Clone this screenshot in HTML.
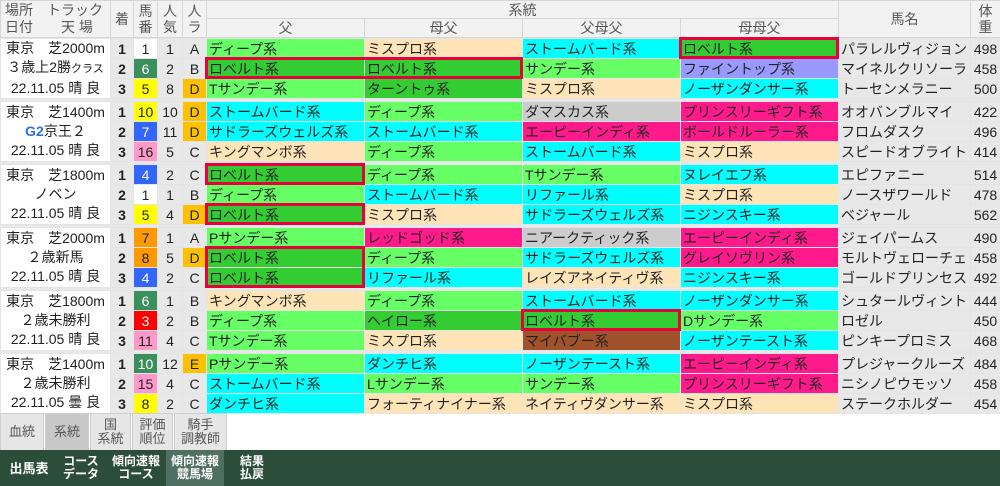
<!DOCTYPE html>
<html><head><meta charset="utf-8">
<style>
*{box-sizing:border-box;margin:0;padding:0}
body{width:1000px;height:486px;overflow:hidden;background:#fff;font-family:"Liberation Sans","Noto Sans CJK JP",sans-serif;color:#222;position:relative}
table{border-collapse:collapse;table-layout:fixed;width:1000px;position:absolute;left:0}
td{padding:0;font-size:14px;line-height:18px;height:20px;max-height:20px;border:1px solid #e4e4e4;white-space:nowrap;overflow:hidden}
th{font-weight:normal;color:#555;font-size:14px;background:#f2f2f2;border:1px solid #d6d6d6;line-height:16px;padding:0}
.hd1 th{height:18px}.hd2 th{height:19px}
.c{text-align:center}.b{font-weight:bold}
.s{padding-left:2px}
.G{background:#66ff66}.D{background:#33cc33}.C{background:#00ffff}.P{background:#ffe4b8}.M{background:#ff1a8c}.Y{background:#cccccc}.L{background:#9999ff}.B{background:#a0522d}
.race{text-align:center;line-height:19px;font-size:14px;background:#fff}
.w1{background:#fff}.g6{background:#3a8f5c;color:#fff}.y5{background:#ffff00}.bl{background:#3366ff;color:#fff}.pk{background:#ff99cc}.or{background:#ff9900}.rd{background:#ff0000;color:#fff}
.rD{background:#ffc000}
.box{position:absolute;border:3px solid #e8003c}
.tabs{position:absolute;left:0;top:413px;height:37px;display:flex}
.tab{background:#e6e6e6;border:1px solid #cfcfcf;border-bottom:none;color:#555;font-size:13px;line-height:14px;display:flex;align-items:center;justify-content:center;text-align:center;margin-right:1px}
.bar{position:absolute;left:0;top:450px;width:1000px;height:36px;background:#2d4d3b}
.bi{position:absolute;top:0;height:36px;color:#fff;font-size:12px;font-weight:bold;line-height:13px;display:flex;align-items:center;justify-content:center;text-align:center}
.bg{position:absolute;left:0;top:37px;width:1000px;height:376px;background:#e8e8e8}
</style></head><body>
<div class="bg"></div>
<table style="top:0">
<colgroup><col style="width:110px"><col style="width:23px"><col style="width:24px"><col style="width:25px"><col style="width:24px"><col style="width:158px"><col style="width:158px"><col style="width:158px"><col style="width:158px"><col style="width:132px"><col style="width:30px"></colgroup>
<tr class="hd1"><th rowspan="2" style="text-align:left;padding:0 4px;line-height:17px">場所　トラック<br>日付　　天 場</th><th rowspan="2">着</th><th rowspan="2">馬<br>番</th><th rowspan="2">人<br>気</th><th rowspan="2">人<br>ラ</th><th colspan="4">系統</th><th rowspan="2">馬名</th><th rowspan="2">体<br>重</th></tr>
<tr class="hd2"><th>父</th><th>母父</th><th>父母父</th><th>母母父</th></tr>
</table>

<table style="top:38px">
<colgroup><col style="width:110px"><col style="width:23px"><col style="width:24px"><col style="width:25px"><col style="width:24px"><col style="width:158px"><col style="width:158px"><col style="width:158px"><col style="width:158px"><col style="width:132px"><col style="width:30px"></colgroup>
<tr><td rowspan="3" class="race">東京　芝2000m<br>３歳上2勝<span style="font-size:11px">クラス</span><br>22.11.05 晴 良</td><td class="c b">1</td><td class="c w1">1</td><td class="c">1</td><td class="c">A</td><td class="s G">ディープ系</td><td class="s P">ミスプロ系</td><td class="s C">ストームバード系</td><td class="s D">ロベルト系</td><td class="s">パラレルヴィジョン</td><td class="c">498</td></tr>
<tr><td class="c b">2</td><td class="c g6">6</td><td class="c">2</td><td class="c">B</td><td class="s D">ロベルト系</td><td class="s D">ロベルト系</td><td class="s G">サンデー系</td><td class="s L">ファイントップ系</td><td class="s">マイネルクリソーラ</td><td class="c">458</td></tr>
<tr><td class="c b">3</td><td class="c y5">5</td><td class="c">8</td><td class="c rD">D</td><td class="s G">Tサンデー系</td><td class="s D">ターントゥ系</td><td class="s P">ミスプロ系</td><td class="s C">ノーザンダンサー系</td><td class="s">トーセンメラニー</td><td class="c">500</td></tr>
</table>

<table style="top:101px">
<colgroup><col style="width:110px"><col style="width:23px"><col style="width:24px"><col style="width:25px"><col style="width:24px"><col style="width:158px"><col style="width:158px"><col style="width:158px"><col style="width:158px"><col style="width:132px"><col style="width:30px"></colgroup>
<tr><td rowspan="3" class="race">東京　芝1400m<br><b style="color:#2b6fe0">G2</b>京王２<br>22.11.05 晴 良</td><td class="c b">1</td><td class="c y5">10</td><td class="c">10</td><td class="c rD">D</td><td class="s C">ストームバード系</td><td class="s G">ディープ系</td><td class="s Y">ダマスカス系</td><td class="s M">プリンスリーギフト系</td><td class="s">オオバンブルマイ</td><td class="c">422</td></tr>
<tr><td class="c b">2</td><td class="c bl">7</td><td class="c">11</td><td class="c rD">D</td><td class="s C">サドラーズウェルズ系</td><td class="s C">ストームバード系</td><td class="s M">エーピーインディ系</td><td class="s M">ボールドルーラー系</td><td class="s">フロムダスク</td><td class="c">496</td></tr>
<tr><td class="c b">3</td><td class="c pk">16</td><td class="c">5</td><td class="c">C</td><td class="s P">キングマンボ系</td><td class="s G">ディープ系</td><td class="s C">ストームバード系</td><td class="s P">ミスプロ系</td><td class="s">スピードオブライト</td><td class="c">414</td></tr>
</table>

<table style="top:164px">
<colgroup><col style="width:110px"><col style="width:23px"><col style="width:24px"><col style="width:25px"><col style="width:24px"><col style="width:158px"><col style="width:158px"><col style="width:158px"><col style="width:158px"><col style="width:132px"><col style="width:30px"></colgroup>
<tr><td rowspan="3" class="race">東京　芝1800m<br>ノベン<br>22.11.05 晴 良</td><td class="c b">1</td><td class="c bl">4</td><td class="c">2</td><td class="c">C</td><td class="s D">ロベルト系</td><td class="s G">ディープ系</td><td class="s G">Tサンデー系</td><td class="s C">ヌレイエフ系</td><td class="s">エピファニー</td><td class="c">514</td></tr>
<tr><td class="c b">2</td><td class="c w1">1</td><td class="c">1</td><td class="c">B</td><td class="s G">ディープ系</td><td class="s C">ストームバード系</td><td class="s C">リファール系</td><td class="s P">ミスプロ系</td><td class="s">ノースザワールド</td><td class="c">478</td></tr>
<tr><td class="c b">3</td><td class="c y5">5</td><td class="c">4</td><td class="c rD">D</td><td class="s D">ロベルト系</td><td class="s P">ミスプロ系</td><td class="s C">サドラーズウェルズ系</td><td class="s C">ニジンスキー系</td><td class="s">ベジャール</td><td class="c">562</td></tr>
</table>

<table style="top:227px">
<colgroup><col style="width:110px"><col style="width:23px"><col style="width:24px"><col style="width:25px"><col style="width:24px"><col style="width:158px"><col style="width:158px"><col style="width:158px"><col style="width:158px"><col style="width:132px"><col style="width:30px"></colgroup>
<tr><td rowspan="3" class="race">東京　芝2000m<br>２歳新馬<br>22.11.05 晴 良</td><td class="c b">1</td><td class="c or">7</td><td class="c">1</td><td class="c">A</td><td class="s G">Pサンデー系</td><td class="s M">レッドゴッド系</td><td class="s Y">ニアークティック系</td><td class="s M">エーピーインディ系</td><td class="s">ジェイパームス</td><td class="c">490</td></tr>
<tr><td class="c b">2</td><td class="c or">8</td><td class="c">5</td><td class="c rD">D</td><td class="s D">ロベルト系</td><td class="s G">ディープ系</td><td class="s C">サドラーズウェルズ系</td><td class="s M">グレイソヴリン系</td><td class="s">モルトヴェローチェ</td><td class="c">458</td></tr>
<tr><td class="c b">3</td><td class="c bl">4</td><td class="c">2</td><td class="c">C</td><td class="s D">ロベルト系</td><td class="s C">リファール系</td><td class="s P">レイズアネイティヴ系</td><td class="s C">ニジンスキー系</td><td class="s">ゴールドプリンセス</td><td class="c">492</td></tr>
</table>

<table style="top:290px">
<colgroup><col style="width:110px"><col style="width:23px"><col style="width:24px"><col style="width:25px"><col style="width:24px"><col style="width:158px"><col style="width:158px"><col style="width:158px"><col style="width:158px"><col style="width:132px"><col style="width:30px"></colgroup>
<tr><td rowspan="3" class="race">東京　芝1800m<br>２歳未勝利<br>22.11.05 晴 良</td><td class="c b">1</td><td class="c g6">6</td><td class="c">1</td><td class="c">B</td><td class="s P">キングマンボ系</td><td class="s G">ディープ系</td><td class="s C">ストームバード系</td><td class="s C">ノーザンダンサー系</td><td class="s">シュタールヴィント</td><td class="c">444</td></tr>
<tr><td class="c b">2</td><td class="c rd">3</td><td class="c">2</td><td class="c">B</td><td class="s G">ディープ系</td><td class="s D">ヘイロー系</td><td class="s D">ロベルト系</td><td class="s G">Dサンデー系</td><td class="s">ロゼル</td><td class="c">450</td></tr>
<tr><td class="c b">3</td><td class="c pk">11</td><td class="c">4</td><td class="c">C</td><td class="s G">Tサンデー系</td><td class="s P">ミスプロ系</td><td class="s B">マイバブー系</td><td class="s C">ノーザンテースト系</td><td class="s">ピンキープロミス</td><td class="c">468</td></tr>
</table>

<table style="top:353px">
<colgroup><col style="width:110px"><col style="width:23px"><col style="width:24px"><col style="width:25px"><col style="width:24px"><col style="width:158px"><col style="width:158px"><col style="width:158px"><col style="width:158px"><col style="width:132px"><col style="width:30px"></colgroup>
<tr><td rowspan="3" class="race">東京　芝1400m<br>２歳未勝利<br>22.11.05 曇 良</td><td class="c b">1</td><td class="c g6">10</td><td class="c">12</td><td class="c rD">E</td><td class="s G">Pサンデー系</td><td class="s C">ダンチヒ系</td><td class="s C">ノーザンテースト系</td><td class="s M">エーピーインディ系</td><td class="s">プレジャークルーズ</td><td class="c">484</td></tr>
<tr><td class="c b">2</td><td class="c pk">15</td><td class="c">4</td><td class="c">C</td><td class="s C">ストームバード系</td><td class="s G">Lサンデー系</td><td class="s G">サンデー系</td><td class="s M">プリンスリーギフト系</td><td class="s">ニシノピウモッソ</td><td class="c">458</td></tr>
<tr><td class="c b">3</td><td class="c y5">8</td><td class="c">2</td><td class="c">C</td><td class="s C">ダンチヒ系</td><td class="s P">フォーティナイナー系</td><td class="s P">ネイティヴダンサー系</td><td class="s P">ミスプロ系</td><td class="s">ステークホルダー</td><td class="c">454</td></tr>
</table>

<div class="box" style="left:205px;top:57px;width:318px;height:22px"></div>
<div class="box" style="left:679px;top:37px;width:160px;height:22px"></div>
<div class="box" style="left:205px;top:163px;width:160px;height:22px"></div>
<div class="box" style="left:205px;top:203px;width:160px;height:22px"></div>
<div class="box" style="left:205px;top:246px;width:160px;height:42px"></div>
<div class="box" style="left:521px;top:309px;width:160px;height:22px"></div>

<div class="tabs">
<div class="tab" style="width:44px">血統</div>
<div class="tab" style="width:44px;background:#c8c8c8">系統</div>
<div class="tab" style="width:41px">国<br>系統</div>
<div class="tab" style="width:41px">評価<br>順位</div>
<div class="tab" style="width:53px">騎手<br>調教師</div>
</div>
<div class="bar">
<div class="bi" style="left:4px;width:50px;font-size:13px">出馬表</div>
<div class="bi" style="left:58px;width:46px">コース<br>データ</div>
<div class="bi" style="left:110px;width:52px">傾向速報<br>コース</div>
<div class="bi" style="left:166px;width:58px;background:#4f7060">傾向速報<br>競馬場</div>
<div class="bi" style="left:232px;width:40px">結果<br>払戻</div>
</div>
</body></html>
